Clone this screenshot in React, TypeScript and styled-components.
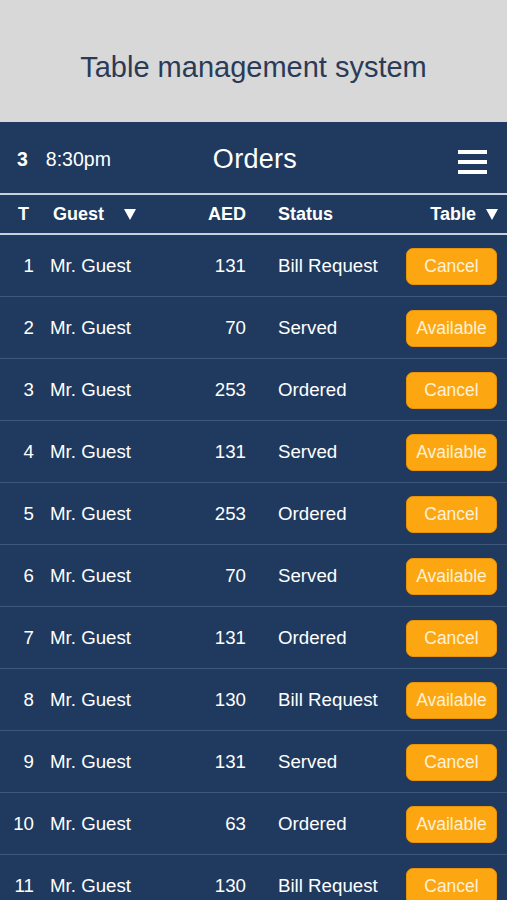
import React from 'react'
import styled, { createGlobalStyle } from 'styled-components'

const GlobalStyle = createGlobalStyle`
  html, body {
    margin: 0;
    padding: 0;
    height: 900px;
    overflow: hidden;
    background: #1f3a5e;
  }
  body {
    font-family: "Liberation Sans", Arial, sans-serif;
  }
`

const Page = styled.div`
  width: 507px;
  display: flex;
  flex-direction: column;
`

const Banner = styled.div`
  height: 122px;
  background: #d8d8d8;
  display: flex;
  align-items: center;
  justify-content: center;
  color: #2b3b57;
  font-size: 29px;
  padding-top: 12px;
  box-sizing: border-box;
`

const Panel = styled.div`
  background: #1f3a5e;
  color: #ffffff;
`

const TopBar = styled.div`
  height: 73px;
  display: grid;
  grid-template-columns: 1fr auto 1fr;
  align-items: center;
  padding: 4px 20px 0 17px;
  box-sizing: border-box;
  border-bottom: 2px solid #c9d1dc;
`

const Clock = styled.div`
  display: flex;
  align-items: baseline;
  gap: 18px;
  font-size: 19.5px;
  b {
    font-weight: bold;
  }
`

const Title = styled.div`
  font-size: 27px;
  letter-spacing: 0.3px;
  margin-left: 6px;
`

const Burger = styled.div`
  justify-self: end;
  width: 29px;
  margin-top: 5px;
  display: flex;
  flex-direction: column;
  gap: 6px;
  span {
    height: 4px;
    background: #ffffff;
  }
`

const Grid = styled.div<{ $head?: boolean }>`
  display: grid;
  grid-template-columns: 34px 1fr 52px 128px 91px;
  column-gap: 16px;
  align-items: center;
  padding-right: 10px;
  height: ${(p) => (p.$head ? '40px' : '62px')};
  border-bottom: ${(p) => (p.$head ? '2px solid #c9d1dc' : '1px solid #3d587a')};
  font-size: ${(p) => (p.$head ? '18px' : '18.7px')};
  font-weight: ${(p) => (p.$head ? 'bold' : 'normal')};
  box-sizing: border-box;
`

const Num = styled.div<{ $head?: boolean }>`
  text-align: ${(p) => (p.$head ? 'left' : 'right')};
  padding-left: ${(p) => (p.$head ? '18px' : '0')};
`

const Name = styled.div<{ $head?: boolean }>`
  display: flex;
  align-items: center;
  padding-left: ${(p) => (p.$head ? '3px' : '0')};
`

const Amount = styled.div`
  text-align: right;
`

const Status = styled.div`
  padding-left: 16px;
  white-space: nowrap;
`

const Arrow = styled.span<{ $gap: number }>`
  display: inline-block;
  width: 0;
  height: 0;
  border-left: 6.5px solid transparent;
  border-right: 6.5px solid transparent;
  border-top: 11px solid #ffffff;
  margin-left: ${(p) => p.$gap}px;
`

const TableHead = styled.div`
  display: flex;
  align-items: center;
  justify-content: flex-end;
  white-space: nowrap;
  margin-right: -1px;
`

const Action = styled.button`
  width: 91px;
  height: 37px;
  margin-top: 1px;
  border: 1px solid #e9930a;
  border-radius: 7px;
  background: #fca712;
  color: #fdf1d6;
  font-family: "Liberation Sans", Arial, sans-serif;
  font-size: 17.5px;
  padding: 0;
`

const rows = [
  { t: 1, amt: 131, status: 'Bill Request', action: 'Cancel' },
  { t: 2, amt: 70, status: 'Served', action: 'Available' },
  { t: 3, amt: 253, status: 'Ordered', action: 'Cancel' },
  { t: 4, amt: 131, status: 'Served', action: 'Available' },
  { t: 5, amt: 253, status: 'Ordered', action: 'Cancel' },
  { t: 6, amt: 70, status: 'Served', action: 'Available' },
  { t: 7, amt: 131, status: 'Ordered', action: 'Cancel' },
  { t: 8, amt: 130, status: 'Bill Request', action: 'Available' },
  { t: 9, amt: 131, status: 'Served', action: 'Cancel' },
  { t: 10, amt: 63, status: 'Ordered', action: 'Available' },
  { t: 11, amt: 130, status: 'Bill Request', action: 'Cancel' },
]

export default function App() {
  return (
    <Page>
      <GlobalStyle />
      <Banner>Table management system</Banner>
      <Panel>
        <TopBar>
          <Clock>
            <b>3</b>
            <span>8:30pm</span>
          </Clock>
          <Title>Orders</Title>
          <Burger>
            <span />
            <span />
            <span />
          </Burger>
        </TopBar>
        <Grid $head>
          <Num $head>T</Num>
          <Name $head>
            Guest<Arrow $gap={20} />
          </Name>
          <Amount>AED</Amount>
          <Status>Status</Status>
          <TableHead>
            Table<Arrow $gap={10} />
          </TableHead>
        </Grid>
        {rows.map((r) => (
          <Grid key={r.t}>
            <Num>{r.t}</Num>
            <Name>Mr. Guest</Name>
            <Amount>{r.amt}</Amount>
            <Status>{r.status}</Status>
            <Action>{r.action}</Action>
          </Grid>
        ))}
      </Panel>
    </Page>
  )
}
